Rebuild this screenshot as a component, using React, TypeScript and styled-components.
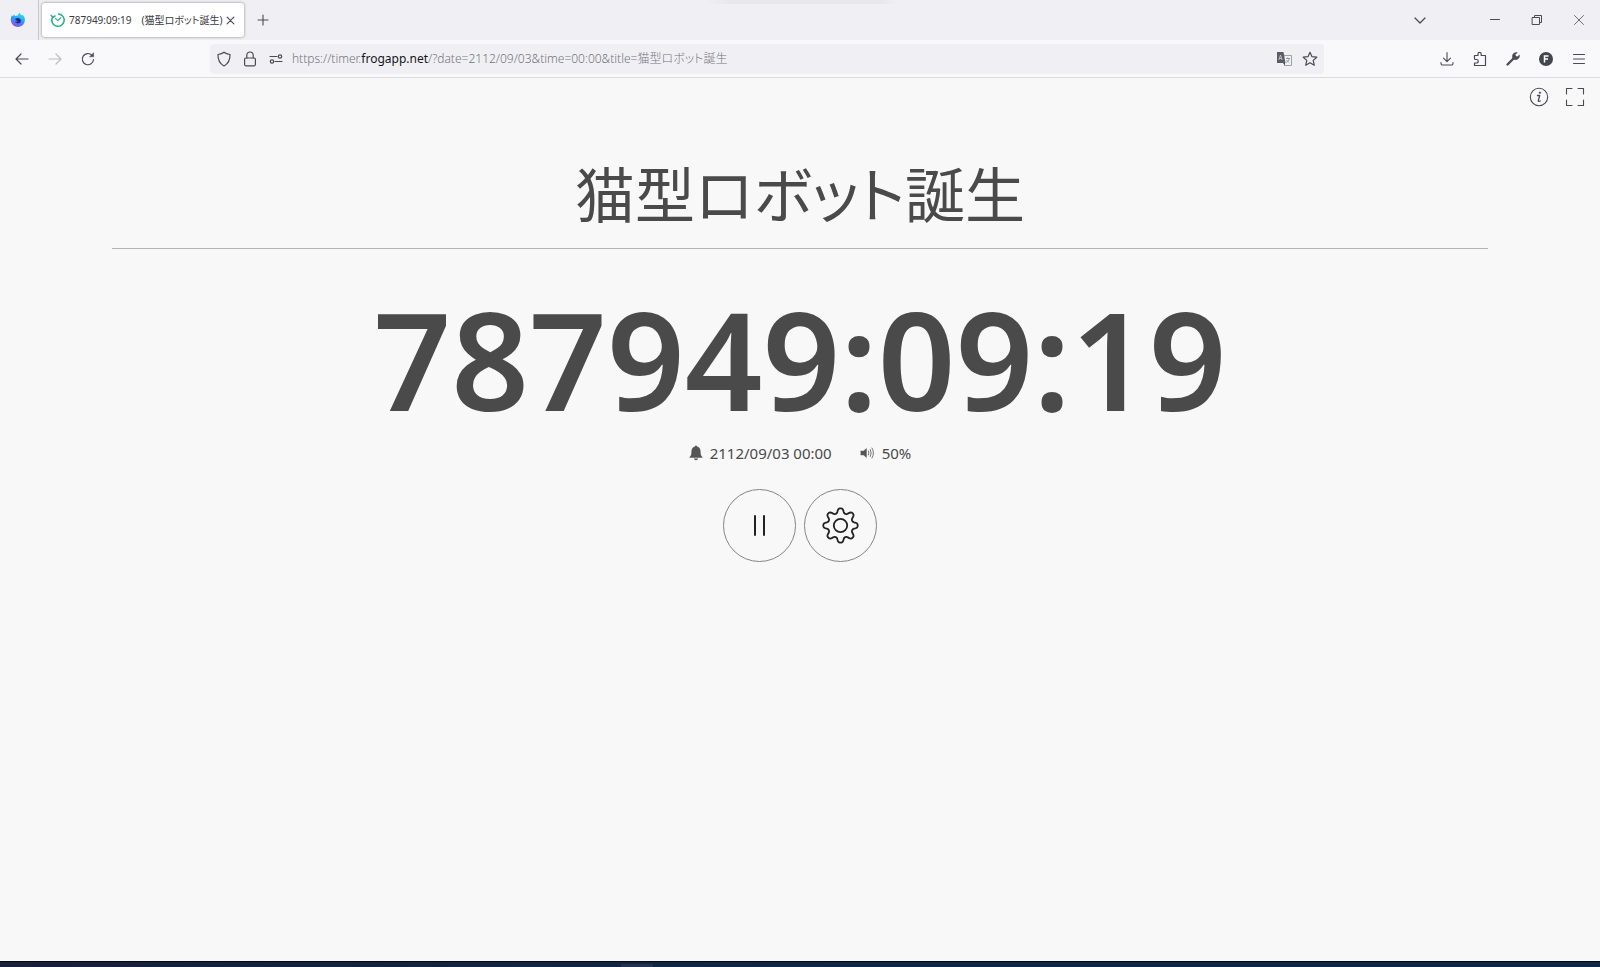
import React from "react";
import styled, { createGlobalStyle } from "styled-components";

const Global = createGlobalStyle`
  * { box-sizing: border-box; }
  body { margin: 0; background: #f8f8f8; font-family: "Noto Sans", "Noto Sans CJK JP", sans-serif; }
  button, input { font: inherit; color: inherit; }
  svg { flex: none; }
`;

const Browser = styled.div`
  min-height: 100vh;
  display: flex;
  flex-direction: column;
`;

const TabBar = styled.header`
  position: relative;
  display: flex;
  align-items: center;
  height: 40px;
  background: #f0f0f4;
  color: #3c3c44;
`;

const TopShade = styled.div`
  position: absolute;
  top: 0;
  left: 44%;
  right: 44%;
  height: 4px;
  background: linear-gradient(90deg, #f0f0f4, #e8e7ec 15%, #e8e7ec 92%, #f0f0f4);
`;

const Pinned = styled.button`
  display: flex;
  align-items: center;
  justify-content: center;
  width: 39px;
  height: 40px;
  padding: 0 2px 0 0;
  border: 0;
  border-right: 1px solid #c6c6cc;
  background: none;
`;

const Tab = styled.div`
  display: flex;
  align-items: center;
  width: 202px;
  height: 34px;
  margin-left: 3px;
  padding: 0 10px 0 8px;
  gap: 3px;
  border-radius: 3px;
  background: #fff;
  box-shadow: 0 0 3px rgba(0, 0, 0, 0.45);
`;

const TabTitle = styled.span`
  flex: 1;
  font-size: 10px;
  line-height: 16px;
  font-feature-settings: "palt";
  white-space: pre;
  color: #3a3a42;
`;

const IconButton = styled.button<{ $w?: number; $dim?: boolean }>`
  display: flex;
  align-items: center;
  justify-content: center;
  flex: none;
  width: ${(p) => p.$w ?? 33}px;
  height: 28px;
  padding: 0;
  border: 0;
  background: none;
  color: ${(p) => (p.$dim ? "#bdbdc2" : "#4a4a52")};
`;

const Spacer = styled.div`
  flex: 1;
`;

const WindowControls = styled.div`
  display: flex;
  margin-left: 16px;
`;

const Toolbar = styled.nav`
  display: flex;
  align-items: center;
  height: 38px;
  padding: 0 5px;
  background: #f9f9fb;
  border-bottom: 1px solid #dcdce0;
`;

const AddressBar = styled.form`
  display: flex;
  align-items: center;
  flex: 1113;
  height: 30px;
  padding: 0 1px;
  border-radius: 4px;
  background: #f0f0f4;
`;

const Gap = styled.div<{ $grow: number }>`
  flex: ${(p) => p.$grow};
`;

const Url = styled.a`
  flex: 1;
  margin-left: 3px;
  font-size: 12px;
  line-height: 20px;
  font-weight: 300;
  font-feature-settings: "palt";
  white-space: nowrap;
  overflow: hidden;
  color: #74747c;
  text-decoration: none;
  strong { font-weight: 400; color: #15141a; }
`;

const Page = styled.main`
  flex: 1;
  display: flex;
  flex-direction: column;
  align-items: center;
  color: #4a4a4a;
`;

const PageTools = styled.div`
  display: flex;
  align-self: flex-end;
  height: 38px;
  align-items: center;
  padding-right: 7px;
`;

const Title = styled.h1`
  width: 86%;
  margin: 31px 0 0;
  padding-bottom: 11px;
  border-bottom: 1px solid #b4b4b4;
  text-align: center;
  font-family: "Noto Sans CJK JP", sans-serif;
  font-feature-settings: "palt";
  font-size: 60px;
  line-height: 90px;
  font-weight: 400;
`;

const Clock = styled.time`
  margin-top: 28px;
  font-size: 136px;
  line-height: 164px;
  font-weight: 600;
`;

const Info = styled.div`
  display: flex;
  align-items: center;
  gap: 28px;
  height: 24px;
  font-size: 15px;
  line-height: 20px;
`;

const InfoItem = styled.span`
  display: flex;
  align-items: center;
  gap: 7px;
`;

const Controls = styled.div`
  display: flex;
  gap: 8px;
  margin-top: 24px;
`;

const RoundButton = styled.button`
  display: flex;
  align-items: center;
  justify-content: center;
  width: 73px;
  height: 73px;
  padding: 0;
  border: 1px solid #858585;
  border-radius: 50%;
  background: none;
  color: #222;
`;

const Taskbar = styled.footer`
  display: flex;
  height: 6px;
  border-top: 1px solid #05080f;
  background: linear-gradient(90deg, #18203a, #0d2746 55%, #0d2746);
`;

const TaskMark = styled.div`
  width: 32px;
  height: 3px;
  margin: 2px 0 0 38.8%;
  background: #26304f;
`;

const line = { fill: "none", stroke: "currentColor", strokeLinecap: "round", strokeLinejoin: "round" } as const;

const Svg = ({ s = 16, w = 1.2, children }: { s?: number; w?: number; children: React.ReactNode }) => (
  <svg width={s} height={s} viewBox="0 0 16 16" {...line} strokeWidth={w} aria-hidden="true">{children}</svg>
);

// Outline of an eight-toothed gear centred in a 39-unit box
const gear = (() => {
  const pts: string[] = [];
  const n = 160;
  for (let i = 0; i < n; i++) {
    const a = (i / n) * Math.PI * 2;
    const c = Math.cos(8 * a);
    const r = 14.9 + (2.3 * Math.tanh(1.4 * c)) / Math.tanh(1.4);
    pts.push(`${(19.5 + r * Math.sin(a)).toFixed(2)} ${(19.5 - r * Math.cos(a)).toFixed(2)}`);
  }
  return `M${pts.join("L")}Z`;
})();

export default function App() {
  return (
    <Browser>
      <Global />
      <TabBar>
        <TopShade />
        <Pinned aria-label="Firefox View">
          <svg width="16" height="16" viewBox="0 0 16 16">
            <defs>
              <linearGradient id="fx" x1="0.7" y1="0" x2="0.3" y2="1">
                <stop offset="0" stopColor="#35e8e0" />
                <stop offset="0.5" stopColor="#2a9bfa" />
                <stop offset="1" stopColor="#9a45f0" />
              </linearGradient>
            </defs>
            <path d="M2 3.2 3 4.3 4.2 2.3 5 4C6 3.4 7.3 3.3 8 3.5 7.8 2.5 8.5 1.4 9.7.8 9.9 2 11 2.6 12 3.5L12.8 2.8C15 5 15.5 8 14.4 10.6A7 7 0 0 1 1.3 10.3C.4 7.9.8 5 2 3.2Z" fill="url(#fx)" />
            <path d="M5 7.3C6 5.8 7.5 6.6 8.5 6 10.5 6.6 11.6 8.6 10.5 10.2 9 12.2 5.8 11.5 5 9.3 6 10 7 9.9 7.7 9.2 6.5 9 6.2 8 5 7.3Z" fill="#28247c" />
          </svg>
        </Pinned>
        <Tab>
          <svg width="16" height="16" viewBox="0 0 16 16" {...line} stroke="#25b07f" strokeWidth="1.5">
            <path d="M8.5 1.9A6.2 6.2 0 1 1 2.6 5" />
            <path d="M1.2 3.4 2.8 5.4 5 4" />
            <path d="M5.6 6.6 7.8 8.7 10.8 5.7" strokeWidth="1.1" />
          </svg>
          <TabTitle>787949:09:19　(猫型ロボット誕生)</TabTitle>
          <IconButton $w={9} aria-label="Close tab"><Svg s={9} w={2}><path d="M2 2 14 14M14 2 2 14" /></Svg></IconButton>
        </Tab>
        <IconButton $w={38} aria-label="New tab"><Svg w={1.1}><path d="M8 3V13M3 8H13" /></Svg></IconButton>
        <Spacer />
        <IconButton $w={76} aria-label="List all tabs"><Svg w={1.3}><path d="M3 6 8 11 13 6" /></Svg></IconButton>
        <WindowControls>
          <IconButton $w={42} aria-label="Minimize"><Svg w={1}><path d="M3.5 7.5H12.5" /></Svg></IconButton>
          <IconButton $w={42} aria-label="Restore"><Svg w={1}><path d="M3.5 5.5H10.5V12.5H3.5ZM5.5 5.5V3.5H12.5V10.5H10.5" /></Svg></IconButton>
          <IconButton $w={42} aria-label="Close"><Svg w={0.8}><path d="M3.5 3.5 12.5 12.5M12.5 3.5 3.5 12.5" /></Svg></IconButton>
        </WindowControls>
      </TabBar>
      <Toolbar>
        <IconButton aria-label="Back"><Svg><path d="M14 8H2M7 3 2 8 7 13" /></Svg></IconButton>
        <IconButton $dim aria-label="Forward"><Svg><path d="M2 8H14M9 3 14 8 9 13" /></Svg></IconButton>
        <IconButton aria-label="Reload"><Svg><path d="M13.5 8.5A5.6 5.6 0 1 1 12 4.3" /><path d="M13.6 2V5.8H9.8Z" fill="currentColor" strokeWidth="0.5" /></Svg></IconButton>
        <Gap $grow={106} />
        <AddressBar>
          <IconButton type="button" $w={26} aria-label="Tracking protection"><Svg><path d="M8 1.2C9.5 2.5 12 3.2 14 3.5 14.2 8.5 12.5 12.5 8 15 3.5 12.5 1.8 8.5 2 3.5 4 3.2 6.5 2.5 8 1.2Z" /></Svg></IconButton>
          <IconButton type="button" $w={26} aria-label="Site security"><Svg><rect x="2.6" y="7" width="10.8" height="7.8" rx="1.2" /><path d="M4.8 7V4.2A3.2 3.2 0 0 1 11.2 4.2V7" /></Svg></IconButton>
          <IconButton type="button" $w={26} aria-label="Permissions"><Svg w={1.2}><path d="M2 5.5H9M7 10.5H14" /><circle cx="12" cy="5.5" r="1.7" /><circle cx="4" cy="10.5" r="1.7" /></Svg></IconButton>
          <Url href="https://timer.frogapp.net/?date=2112/09/03&time=00:00&title=猫型ロボット誕生">
            https://timer.<strong>frogapp.net</strong>/?date=2112/09/03&amp;time=00:00&amp;title=猫型ロボット誕生
          </Url>
          <IconButton type="button" $w={26} aria-label="Translate">
            <svg width="16" height="16" viewBox="0 0 16 16" aria-hidden="true">
              <path d="M7 4.5H15.5V14.5H8" fill="none" stroke="#a0a0a8" />
              <path d="M1 1H7.5L9.5 12H1Z" fill="#5b5b66" />
              <path d="M9 12V14.5L7 12Z" fill="#45454d" />
              <path d="M2.8 9 4.5 4 6.2 9M3.5 7.5H5.5" fill="none" stroke="#c8c8d0" strokeWidth="0.9" />
              <path d="M10 7.5H14M11.7 6.5V7.5M13.3 7.5C12.8 9.5 11.3 11 10.3 11.5M10.5 9 13 11.5" fill="none" stroke="#85858e" strokeWidth="0.8" />
            </svg>
          </IconButton>
          <IconButton type="button" $w={26} aria-label="Bookmark"><Svg><path d="M8 1.3 10 5.7 14.8 6.2 11.2 9.4 12.3 14.2 8 11.7 3.7 14.2 4.8 9.4 1.2 6.2 6 5.7Z" /></Svg></IconButton>
        </AddressBar>
        <Gap $grow={106} />
        <IconButton aria-label="Downloads"><Svg w={1.1}><path d="M8 1.5V10.5M4.5 7.2 8 10.6 11.5 7.2M2 11.5V12.5A1.5 1.5 0 0 0 3.5 14H12.5A1.5 1.5 0 0 0 14 12.5V11.5" /></Svg></IconButton>
        <IconButton aria-label="Extensions"><Svg><path d="M2.5 7V4.5H6V3A1.6 1.6 0 0 1 9.2 3V4.5H13.5V14.5H2.5V12H4.5A1.6 1.6 0 0 0 4.5 8.500H3Q2.500 8.500 2.500 7" /></Svg></IconButton>
        <IconButton aria-label="Developer tools"><Svg><path d="M2.5 13.5 8.5 7.5" strokeWidth="2.3" /><path d="M12 1.5A4 4 0 0 0 7.5 6.7L9.3 8.5A4 4 0 0 0 14.500 4L12 6 10 4Z" fill="currentColor" strokeWidth="0.5" /></Svg></IconButton>
        <IconButton aria-label="Account"><svg width="16" height="16" viewBox="0 0 16 16"><circle cx="8" cy="8" r="7" fill="#45454d" /><path d="M6.5 11.5V5H10.5M6.5 8H10" fill="none" stroke="#fff" strokeWidth="1.5" /></svg></IconButton>
        <IconButton aria-label="Menu"><Svg w={1}><path d="M2.5 3.5H13.5M2.5 8H13.5M2.5 12.5H13.5" /></Svg></IconButton>
      </Toolbar>
      <Page>
        <PageTools>
          <IconButton $w={36} aria-label="Information"><svg width="20" height="20" viewBox="0 0 20 20" {...line}><circle cx="10" cy="10" r="8.7" strokeWidth="1.1" /><path d="M8.5 8.5H10.7L9.3 13.7Q9.2 15 11.3 14" strokeWidth="1.3" /><circle cx="10.9" cy="5.7" r="0.9" fill="currentColor" strokeWidth="0.3" /></svg></IconButton>
          <IconButton $w={36} aria-label="Full screen"><svg width="20" height="20" viewBox="0 0 20 20" {...line} strokeWidth="1.1"><path d="M1.5 7V1.5H7M13 1.5H18.5V7M18.5 13V18.5H13M7 18.5H1.5V13" /></svg></IconButton>
        </PageTools>
        <Title>猫型ロボット誕生</Title>
        <Clock>787949:09:19</Clock>
        <Info>
          <InfoItem>
            <svg width="14" height="16" viewBox="0 0 14 16" fill="#555"><path d="M6 1.5A1 1 0 0 1 8 1.5C10.8 2.2 11.6 4.2 11.6 7 11.6 10 12.2 11 13.5 12V12.8H.5V12C1.8 11 2.4 10 2.4 7 2.4 4.2 3.2 2.2 6 1.5ZM5 13.5H9A2 1.8 0 0 1 5 13.5Z" /></svg>
            2112/09/03 00:00
          </InfoItem>
          <InfoItem>
            <svg width="15" height="14" viewBox="0 0 15 14" {...line} stroke="#666"><path d="M1 5H3.5L6.5 2.5V11.5L3.5 9H1Z" fill="#555" strokeWidth="0.5" /><path d="M8.5 5Q9.5 7 8.5 9M10.3 3.5Q12.2 7 10.3 10.5M12 2Q15 7 12 12" strokeWidth="0.9" /></svg>
            50%
          </InfoItem>
        </Info>
        <Controls>
          <RoundButton aria-label="Pause"><svg width="39" height="39" viewBox="0 0 39 39" {...line} strokeWidth="2"><path d="M15 10V29M24 10V29" /></svg></RoundButton>
          <RoundButton aria-label="Settings"><svg width="39" height="39" viewBox="0 0 39 39" {...line} strokeWidth="1.8"><path d={gear} /><circle cx="19.5" cy="19.5" r="6.7" /></svg></RoundButton>
        </Controls>
      </Page>
      <Taskbar><TaskMark /></Taskbar>
    </Browser>
  );
}
